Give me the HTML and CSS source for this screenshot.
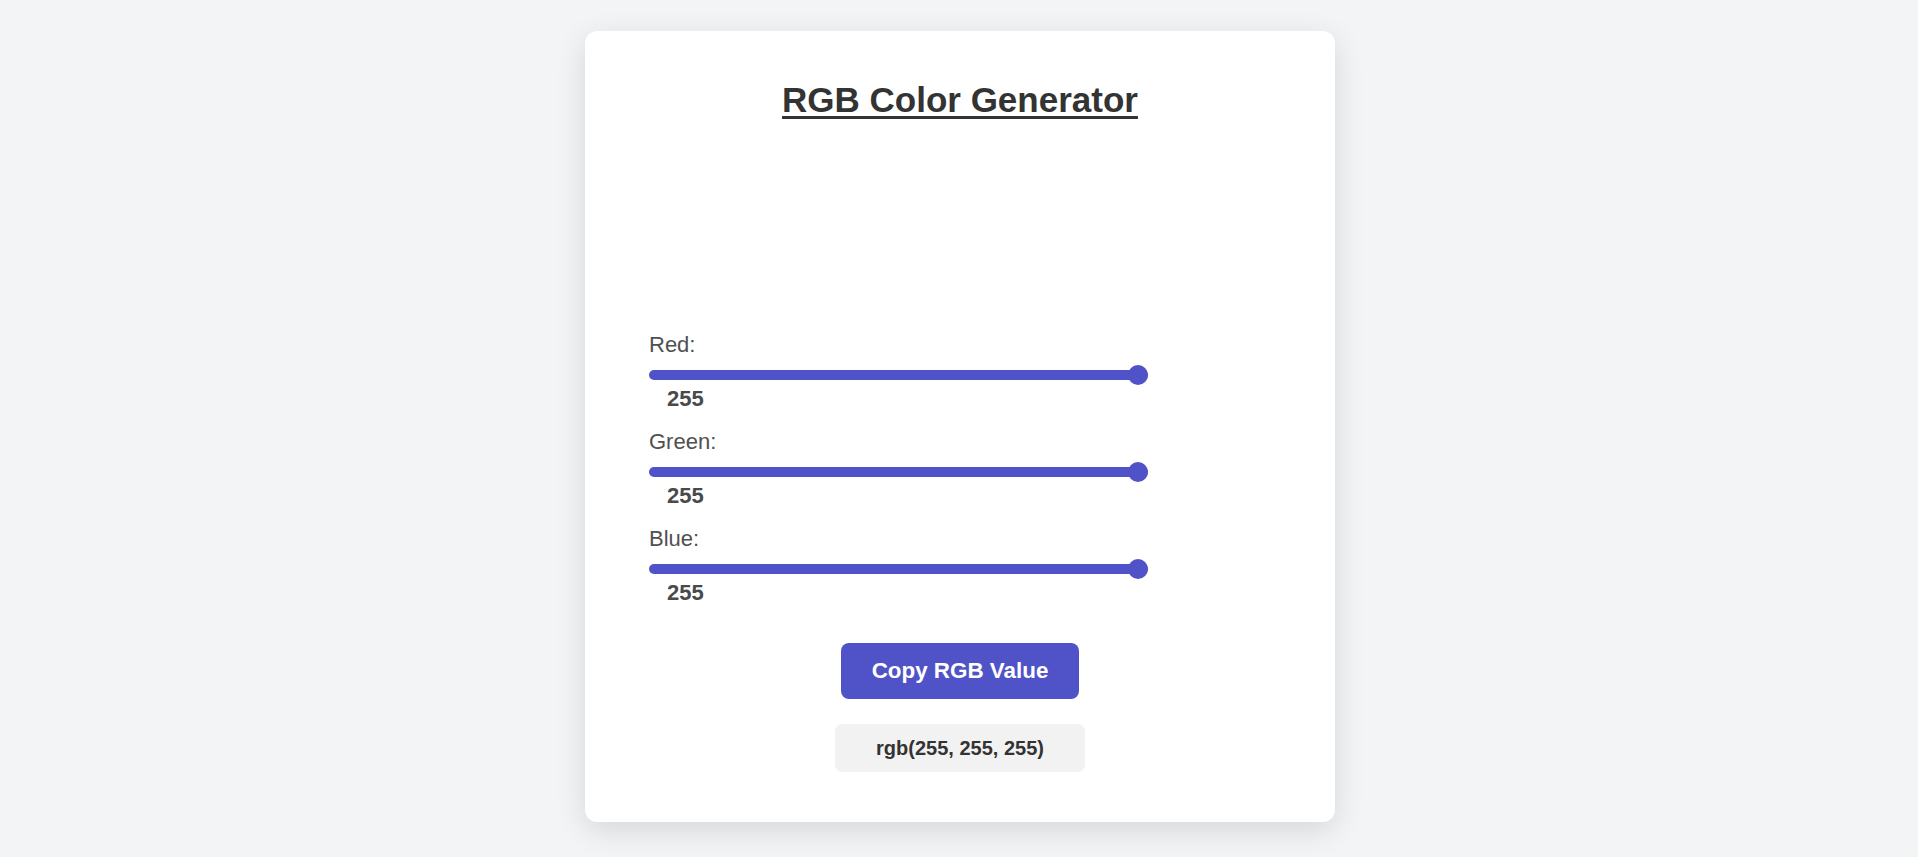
FILE: index.html
```html
<!DOCTYPE html>
<html lang="en">
<head>
<meta charset="utf-8">
<title>RGB Color Generator</title>
<link rel="stylesheet" href="styles.css">
</head>
<body>
<main class="card">
  <h1 class="title">RGB Color Generator</h1>
  <div class="preview"></div>
  <div class="controls">
    <div class="row">
      <label class="label" for="red">Red:</label>
      <input class="slider" id="red" type="range" min="0" max="255" value="255">
      <span class="value">255</span>
    </div>
    <div class="row">
      <label class="label" for="green">Green:</label>
      <input class="slider" id="green" type="range" min="0" max="255" value="255">
      <span class="value">255</span>
    </div>
    <div class="row">
      <label class="label" for="blue">Blue:</label>
      <input class="slider" id="blue" type="range" min="0" max="255" value="255">
      <span class="value">255</span>
    </div>
  </div>
  <button class="copy-btn" type="button">Copy RGB Value</button>
  <div class="output">rgb(255, 255, 255)</div>
</main>
</body>
</html>
```
FILE: styles.css
```css
html, body {
  margin: 0;
  padding: 0;
}
body {
  background: #f3f4f6;
  font-family: "Liberation Sans", Arial, sans-serif;
  display: flex;
  justify-content: center;
  padding: 31px 0 0 2px;
  min-height: 857px;
  box-sizing: border-box;
}
.card {
  width: 750px;
  height: 791px;
  box-sizing: border-box;
  background: #ffffff;
  border-radius: 12px;
  box-shadow: 0 8px 30px rgba(0, 0, 0, 0.12);
  padding: 49px 64px 0;
  display: flex;
  flex-direction: column;
  align-items: center;
}
.title {
  margin: 0;
  font-size: 35px;
  line-height: 40px;
  font-weight: 700;
  color: #333333;
  text-decoration: underline;
  text-decoration-thickness: 3px;
  text-underline-offset: 4px;
}
.preview {
  width: 100%;
  height: 213px;
  background: rgb(255, 255, 255);
}
.controls {
  align-self: stretch;
  display: flex;
  flex-direction: column;
  gap: 19px;
}
.row {
  display: flex;
  flex-direction: column;
  align-items: flex-start;
}
.label {
  font-size: 22px;
  line-height: 24px;
  color: #505050;
}
.slider {
  -webkit-appearance: none;
  appearance: none;
  width: 499px;
  height: 20px;
  margin: 8px 0 1px;
  padding: 0;
  background: transparent;
}
.slider::-webkit-slider-runnable-track {
  height: 10px;
  border-radius: 5px;
  background: #4f53c7;
}
.slider::-webkit-slider-thumb {
  -webkit-appearance: none;
  appearance: none;
  width: 20px;
  height: 20px;
  border-radius: 50%;
  background: #4f53c7;
  margin-top: -5px;
  border: none;
}
.value {
  margin-left: 18px;
  font-size: 22px;
  line-height: 25px;
  font-weight: 700;
  color: #4a4a4a;
}
.copy-btn {
  margin-top: 38px;
  width: 238px;
  height: 56px;
  border: none;
  border-radius: 8px;
  background: #4f53c7;
  color: #ffffff;
  font-family: "Liberation Sans", Arial, sans-serif;
  font-size: 22.4px;
  font-weight: 700;
  padding: 0;
}
.output {
  margin-top: 25px;
  width: 250px;
  height: 48px;
  box-sizing: border-box;
  background: #f2f2f2;
  border-radius: 7px;
  display: flex;
  align-items: center;
  justify-content: center;
  font-size: 20px;
  font-weight: 700;
  color: #333333;
}
```
